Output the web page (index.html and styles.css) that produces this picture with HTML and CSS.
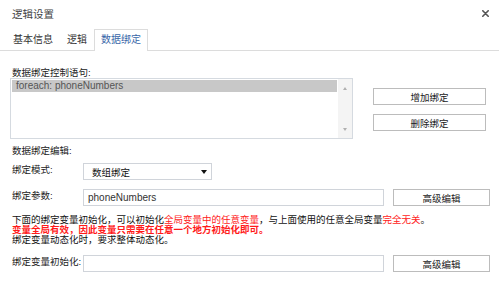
FILE: index.html
```html
<!DOCTYPE html>
<html>
<head>
<meta charset="utf-8">
<link rel="stylesheet" href="styles.css">
</head>
<body>
<div class="dialog">
  <div class="header">
    <span class="title">逻辑设置</span>
    <span class="close"><svg width="7" height="7" viewBox="0 0 7 7"><path d="M0.8 0.8 L6.2 6.2 M6.2 0.8 L0.8 6.2" stroke="#555" stroke-width="1.6" stroke-linecap="round"/></svg></span>
  </div>
  <div class="tabs">
    <div class="tab">基本信息</div>
    <div class="tab">逻辑</div>
    <div class="tab active">数据绑定</div>
  </div>
  <div class="content">
    <div class="bind-top">
      <div class="bind-list-col">
        <div class="label">数据绑定控制语句:</div>
        <div class="listbox">
          <div class="list-items"><div class="item selected">foreach: phoneNumbers</div></div>
          <div class="scrollbar"><span class="arrow up"></span><span class="arrow down"></span></div>
        </div>
      </div>
      <div class="bind-buttons">
        <div class="btn wide">增加绑定</div>
        <div class="btn wide">删除绑定</div>
      </div>
    </div>
    <div class="label section">数据绑定编辑:</div>
    <div class="form-row first">
      <div class="row-label">绑定模式:</div>
      <div class="select"><span>数组绑定</span><span class="caret"></span></div>
    </div>
    <div class="form-row">
      <div class="row-label">绑定参数:</div>
      <div class="input">phoneNumbers</div>
      <div class="btn adv">高级编辑</div>
    </div>
    <div class="notes">
      <div>下面的绑定变量初始化，可以初始化<span class="red">全局变量中的任意变量</span>，与上面使用的任意全局变量<span class="red">完全无关</span>。</div>
      <div class="red bold">变量全局有效，因此变量只需要在任意一个地方初始化即可。</div>
      <div>绑定变量动态化时，要求整体动态化。</div>
    </div>
    <div class="form-row last">
      <div class="row-label">绑定变量初始化:</div>
      <div class="input"></div>
      <div class="btn adv">高级编辑</div>
    </div>
  </div>
</div>
</body>
</html>
```

FILE: styles.css
```css
html, body {
  margin: 0;
  padding: 0;
  background: #fff;
}
.dialog {
  width: 499px;
  height: 289px;
  background: #fff;
  font-family: "Liberation Sans", "Noto Sans CJK SC", sans-serif;
  font-size: 9.5px;
  color: #222;
  overflow: hidden;
}
.header {
  height: 26px;
  display: flex;
  align-items: center;
  justify-content: space-between;
  padding: 0 10px 0 12px;
}
.title {
  font-size: 10.5px;
  color: #444;
}
.close {
  display: flex;
  width: 7px;
  height: 7px;
}
.tabs {
  margin-top: 3px;
  height: 21px;
  display: flex;
  padding-left: 6px;
  border-bottom: 1px solid #dcdcdc;
}
.tab {
  padding: 0 6px;
  line-height: 20px;
  height: 20px;
  font-size: 10px;
  border: 1px solid transparent;
  border-bottom: none;
  color: #333;
}
.tab.active {
  border-color: #dcdcdc;
  background: #fff;
  height: 21px;
  color: #3866a8;
}
.content {
  padding: 17px 0 0 10px;
}
.label {
  line-height: 10px;
  padding-left: 2px;
  color: #222;
}
.bind-top {
  display: flex;
}
.listbox {
  width: 343px;
  height: 61px;
  box-sizing: border-box;
  border: 1px solid #d5dae0;
  display: flex;
}
.list-items {
  flex: 1;
  padding: 1px;
}
.item {
  height: 12px;
  line-height: 12px;
  padding-left: 4px;
  font-size: 10px;
  color: #555;
}
.item.selected {
  background: #c8c8c8;
}
.scrollbar {
  width: 14px;
  background: #f4f4f4;
  display: flex;
  flex-direction: column;
  justify-content: space-between;
  align-items: center;
  padding: 8px 0 7px;
  box-sizing: border-box;
}
.arrow {
  width: 0;
  height: 0;
  border-left: 2.5px solid transparent;
  border-right: 2.5px solid transparent;
}
.arrow.up {
  border-bottom: 3px solid #b0b0b0;
}
.arrow.down {
  border-top: 3px solid #b0b0b0;
}
.bind-buttons {
  margin-left: 20px;
  margin-top: 20px;
  display: flex;
  flex-direction: column;
  gap: 9px;
}
.btn {
  height: 17px;
  box-sizing: border-box;
  border: 1px solid #bcbcbc;
  background: #fff;
  display: flex;
  align-items: center;
  justify-content: center;
  color: #222;
}
.btn.wide {
  width: 113px;
}
.btn.adv {
  width: 97px;
  margin-left: 9px;
}
.label.section {
  margin-top: 7px;
}
.form-row {
  display: flex;
  align-items: flex-start;
  margin-top: 9px;
}
.form-row.first {
  margin-top: 7px;
}
.form-row.last {
  margin-top: 10px;
}
.row-label {
  width: 71px;
  flex-shrink: 0;
  white-space: nowrap;
  padding-left: 2px;
  padding-top: 2px;
  line-height: 10px;
  color: #222;
}
.select {
  width: 129px;
  height: 17px;
  box-sizing: border-box;
  border: 1px solid #d0d4da;
  display: flex;
  align-items: center;
  justify-content: space-between;
  padding: 0 4px 0 8px;
  color: #111;
}
.caret {
  width: 0;
  height: 0;
  border-left: 3px solid transparent;
  border-right: 3px solid transparent;
  border-top: 4px solid #111;
}
.input {
  width: 301px;
  height: 17px;
  box-sizing: border-box;
  border: 1px solid #d0d4da;
  display: flex;
  align-items: center;
  padding-left: 4px;
  font-size: 10px;
  color: #333;
}
.notes {
  margin-top: 9px;
  padding-left: 2px;
  line-height: 10px;
  color: #111;
}
.red {
  color: #ff1a1a;
}
.bold {
  font-weight: bold;
}
```
